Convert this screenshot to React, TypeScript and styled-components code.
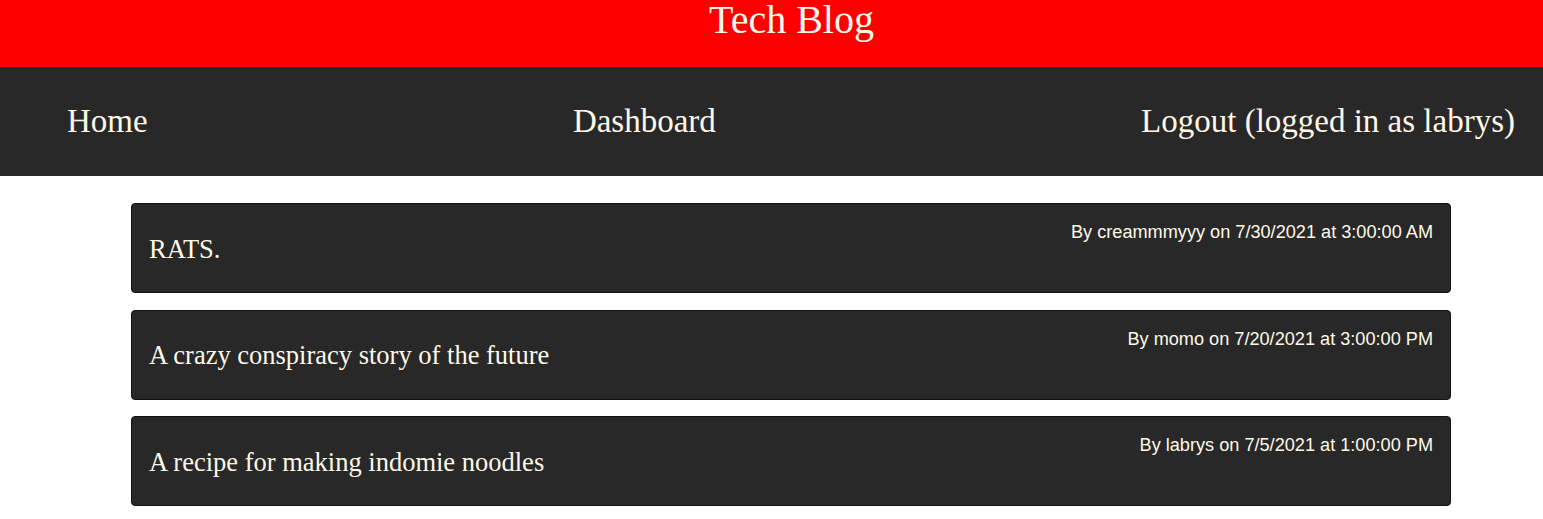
import React from "react";
import styled, { createGlobalStyle } from "styled-components";

const GlobalStyle = createGlobalStyle`
  html, body {
    margin: 0;
    padding: 0;
    background: #ffffff;
    font-family: "Liberation Serif", "Times New Roman", serif;
  }
`;

const Header = styled.header`
  background: #ff0000;
  height: 67px;
  display: flex;
  justify-content: center;
  align-items: flex-start;
  padding-left: 40px;
`;

const Title = styled.h1`
  margin: 0;
  font-size: 40px;
  line-height: 40px;
  font-weight: 400;
  color: #fffaf0;
`;

const Nav = styled.nav`
  background: #282828;
  height: 109px;
  display: flex;
  justify-content: space-between;
  align-items: center;
  padding: 0 28px 0 67px;
  box-sizing: border-box;
`;

const NavLink = styled.a`
  font-size: 33px;
  color: #fff8e8;
  text-decoration: none;
  cursor: pointer;
`;

const Main = styled.main`
  display: flex;
  flex-direction: column;
  gap: 16.5px;
  padding: 27px 92px 0 131px;
`;

const Card = styled.article`
  display: flex;
  justify-content: space-between;
  background: #282828;
  border: 1px solid #111111;
  border-radius: 4px;
  padding: 16px 17px 16px 17px;
  height: 90px;
  box-sizing: border-box;
`;

const PostTitle = styled.h2`
  margin: 0;
  align-self: center;
  font-size: 26.5px;
  font-weight: 400;
  color: #fff8e8;
  line-height: 30px;
  padding-top: 1px;
`;

const Meta = styled.p`
  margin: 2px 0 0 0;
  align-self: flex-start;
  font-family: "Liberation Sans", Arial, sans-serif;
  font-size: 18.15px;
  color: #fff8e8;
`;

const posts = [
  { title: "RATS.", meta: "By creammmyyy on 7/30/2021 at 3:00:00 AM" },
  { title: "A crazy conspiracy story of the future", meta: "By momo on 7/20/2021 at 3:00:00 PM" },
  { title: "A recipe for making indomie noodles", meta: "By labrys on 7/5/2021 at 1:00:00 PM" },
];

export default function App() {
  return (
    <>
      <GlobalStyle />
      <Header>
        <Title>Tech Blog</Title>
      </Header>
      <Nav>
        <NavLink>Home</NavLink>
        <NavLink>Dashboard</NavLink>
        <NavLink>Logout (logged in as labrys)</NavLink>
      </Nav>
      <Main>
        {posts.map((p) => (
          <Card key={p.title}>
            <PostTitle>{p.title}</PostTitle>
            <Meta>{p.meta}</Meta>
          </Card>
        ))}
      </Main>
    </>
  );
}
